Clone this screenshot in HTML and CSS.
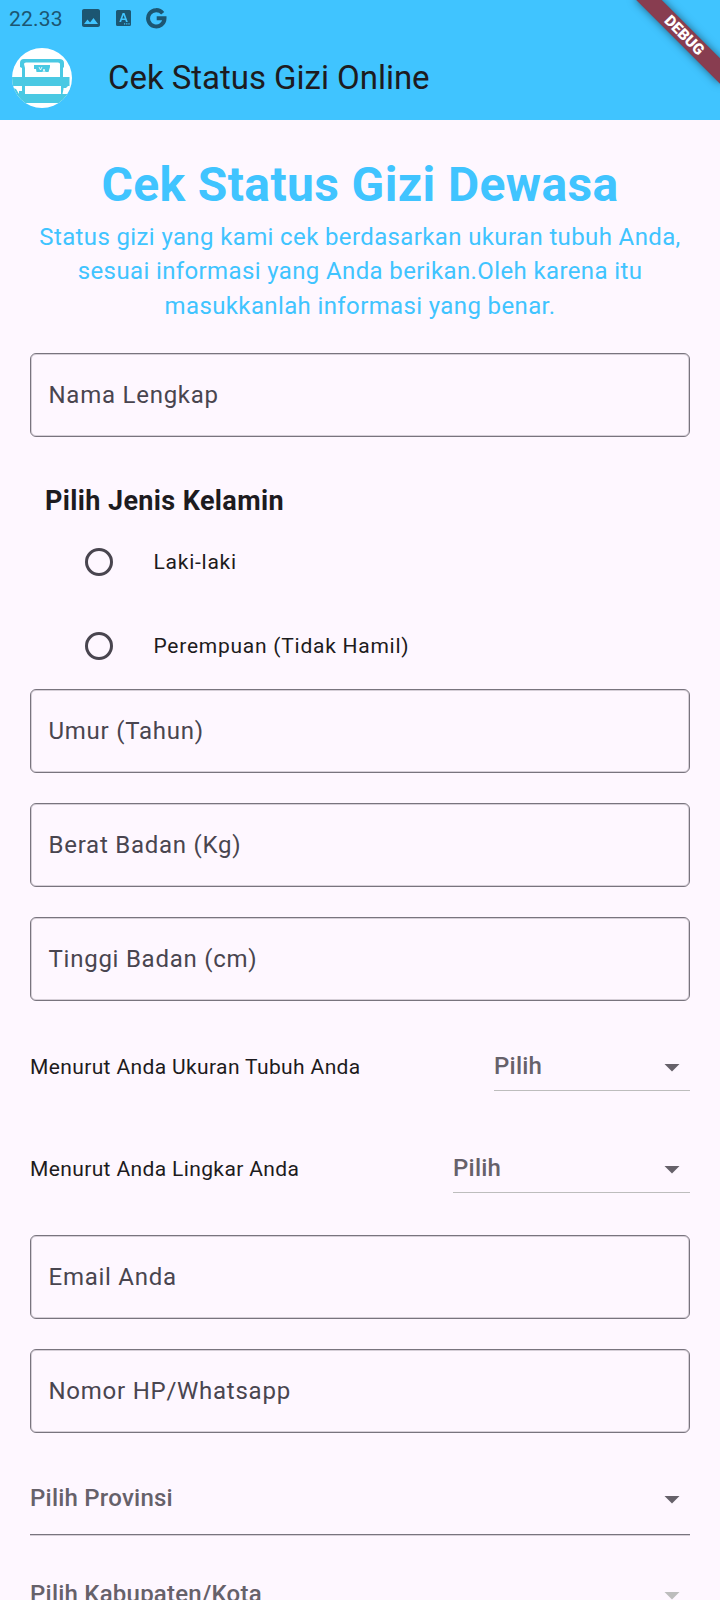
FILE: index.html
```html
<!DOCTYPE html>
<html lang="id">
<head>
<meta charset="utf-8">
<title>Cek Status Gizi Online</title>
<link rel="stylesheet" href="styles.css">
</head>
<body>
<header class="top">
  <div class="status">
    <span class="clock">22.33</span>
    <svg class="st-img" width="18" height="18" viewBox="3 3 18 18"><path d="M21 19V5c0-1.1-.9-2-2-2H5c-1.1 0-2 .9-2 2v14c0 1.100.9 2 2 2h14c1.100 0 2-.9 2-2zM8.500 13.500l2.500 3.010L14.500 12l4.500 6H5l3.500-4.500z"/></svg>
    <svg class="st-a" width="15" height="16" viewBox="0 0 15 16"><path fill-rule="evenodd" d="M1.500 0h12A1.500 1.500 0 0 1 15 1.500v13a1.500 1.500 0 0 1-1.500 1.500h-12A1.500 1.500 0 0 1 0 14.500v-13A1.500 1.500 0 0 1 1.500 0zM6.600 3L3.300 12h1.800l.7-2h3.500l.7 2h1.800L8.500 3zM7.550 5.100L8.800 8.600H6.300zM8 13.300v1.200h1.200v-1.200zM10.200 13.300v1.200h1.200v-1.200zM12.400 13.300v1.200h1.200v-1.200z"/></svg>
    <svg class="st-g" width="21" height="21" viewBox="0 0 21 21"><path d="M16.700 5.200A8.200 8.200 0 1 0 18.500 10.300H10.700" fill="none" stroke="#1c5672" stroke-width="4"/></svg>
  </div>
  <div class="appbar">
    <svg class="logo" width="60" height="60" viewBox="0 0 60 60">
      <defs><clipPath id="disc"><circle cx="30" cy="30" r="30"/></clipPath></defs>
      <g clip-path="url(#disc)">
        <rect width="60" height="60" fill="#fff"/>
        <g fill="#4ac9e3">
          <path d="M10 29V20l-2-1v-4q0-4 4-4h35q5 0 5 4v4l-1 1v9h-3V16q0-1.500-2-1.500H14q-2 0-2 1.500l1 4v9z"/>
          <path d="M22 17h16v2l-1.500 5H24.500l-.5-3h-2z"/>
          <path d="M0 29h57.500v9H0z"/>
          <path d="M10 38h3v8h-3zM49 38h2.500v3l-1 5H49z"/>
          <path d="M0 46h60v9H0zM1 40l3 1 3 5H2z"/>
          <path d="M7 43h4v3H7zM50 38h6l-2 2h-3z"/>
        </g>
        <path d="M27 19l1.500 3 1.500-3M31 24l1-3 1 3" fill="none" stroke="#fff" stroke-width=".8"/>
      </g>
    </svg>
    <h1 class="title">Cek Status Gizi Online</h1>
  </div>
  <div class="debug"><span>DEBUG</span></div>
</header>
<main class="form">
  <h2 class="heading">Cek Status Gizi Dewasa</h2>
  <p class="intro">Status gizi yang kami cek berdasarkan ukuran tubuh Anda,<br>sesuai informasi yang Anda berikan.Oleh karena itu<br>masukkanlah informasi yang benar.</p>
  <div class="field first">Nama Lengkap</div>
  <h3 class="group">Pilih Jenis Kelamin</h3>
  <label class="option"><span class="radio"></span>Laki-laki</label>
  <label class="option"><span class="radio"></span>Perempuan (Tidak Hamil)</label>
  <div class="stack">
    <div class="field">Umur (Tahun)</div>
    <div class="field">Berat Badan (Kg)</div>
    <div class="field">Tinggi Badan (cm)</div>
    <div class="row"><span class="question">Menurut Anda Ukuran Tubuh Anda</span>
      <div class="select small body-size"><span class="hint">Pilih</span><svg class="arrow" width="36" height="36" viewBox="0 0 24 24"><path d="M7 10l5 5 5-5z"/></svg></div></div>
    <div class="row"><span class="question">Menurut Anda Lingkar Anda</span>
      <div class="select small girth"><span class="hint">Pilih</span><svg class="arrow" width="36" height="36" viewBox="0 0 24 24"><path d="M7 10l5 5 5-5z"/></svg></div></div>
    <div class="field">Email Anda</div>
    <div class="field">Nomor HP/Whatsapp</div>
    <div class="select wide"><span class="hint">Pilih Provinsi</span><svg class="arrow" width="36" height="36" viewBox="0 0 24 24"><path d="M7 10l5 5 5-5z"/></svg></div>
  </div>
  <div class="select wide off"><span class="hint">Pilih Kabupaten/Kota</span><svg class="arrow" width="36" height="36" viewBox="0 0 24 24"><path d="M7 10l5 5 5-5z"/></svg></div>
</main>
</body>
</html>
```
FILE: styles.css
```css
* { box-sizing: border-box; }
html, body { margin: 0; height: 1600px; overflow: hidden; }
body { width: 720px; background: #fef7ff; color: #1d1b20; font-family: Roboto, "Noto Sans", sans-serif; }
h1, h2, h3, p { margin: 0; }
.top { position: relative; height: 120px; background: #40c4ff; overflow: hidden; }
.status { height: 36px; padding-left: 9px; display: flex; align-items: center; color: #1c5672; fill: #1c5672; }
.clock { width: 73px; font-size: 21px; line-height: 36px; padding-top: 1px; letter-spacing: .2px; }
.st-a { margin-left: 16px; }
.st-g { margin-left: 15px; }
.appbar { height: 84px; padding-left: 12px; display: flex; align-items: center; }
.title { margin-left: 36px; font-size: 33px; font-weight: 400; line-height: 42px; letter-spacing: -.03px; }
.debug { position: absolute; left: 624px; top: 26px; width: 120px; height: 18px; padding-left: 1px; transform: rotate(45deg); background: #883d50; box-shadow: 0 0 9px rgba(0,0,0,.5); color: #fff; font-size: 15.300px; font-weight: 900; line-height: 18px; text-align: center; }
.form { padding: 30px 30px 0; }
.heading { height: 70px; font-size: 48px; line-height: 69px; font-weight: 700; text-align: center; color: #40c4ff; letter-spacing: .375px; }
.intro { height: 103px; font-size: 24px; line-height: 34.300px; text-align: center; color: #40c4ff; letter-spacing: .375px; white-space: nowrap; }
.field { height: 84px; border: 1px solid #79747e; border-radius: 6px; box-shadow: inset 0 0 0 1px rgba(121,116,126,.3); padding-left: 17.500px; font-size: 24px; line-height: 82px; letter-spacing: .75px; color: #49454f; }
.first { margin-top: 30px; }
.group { height: 38px; margin: 45px 0 0 15px; font-size: 27px; line-height: 39px; font-weight: 700; letter-spacing: .375px; }
.option { display: flex; align-items: center; height: 84px; padding-left: 55px; gap: 40.500px; font-size: 21px; letter-spacing: .75px; }
.radio { width: 28px; height: 28px; border: 3px solid #49454f; border-radius: 50%; }
.stack { display: flex; flex-direction: column; gap: 30px; }
.row { height: 72px; display: flex; align-items: center; justify-content: space-between; }
.question { font-size: 21px; letter-spacing: .375px; }
.select { display: flex; align-items: center; justify-content: space-between; font-size: 24px; font-weight: 500; letter-spacing: .225px; color: #66616a; }
.hint { padding-bottom: 2px; }
.arrow { fill: #66616a; }
.small { height: 48px; border-bottom: 1px solid #bdbdbd; }
.body-size { width: 196px; }
.girth { width: 237px; }
.wide { height: 72px; border-bottom: 1px solid #79747e; box-shadow: 0 1px rgba(121,116,126,.3); }
.stack .field:first-child { margin-top: 1px; }
.off { margin-top: 24px; }
.off .arrow { fill: #bdbdbd; }
```
